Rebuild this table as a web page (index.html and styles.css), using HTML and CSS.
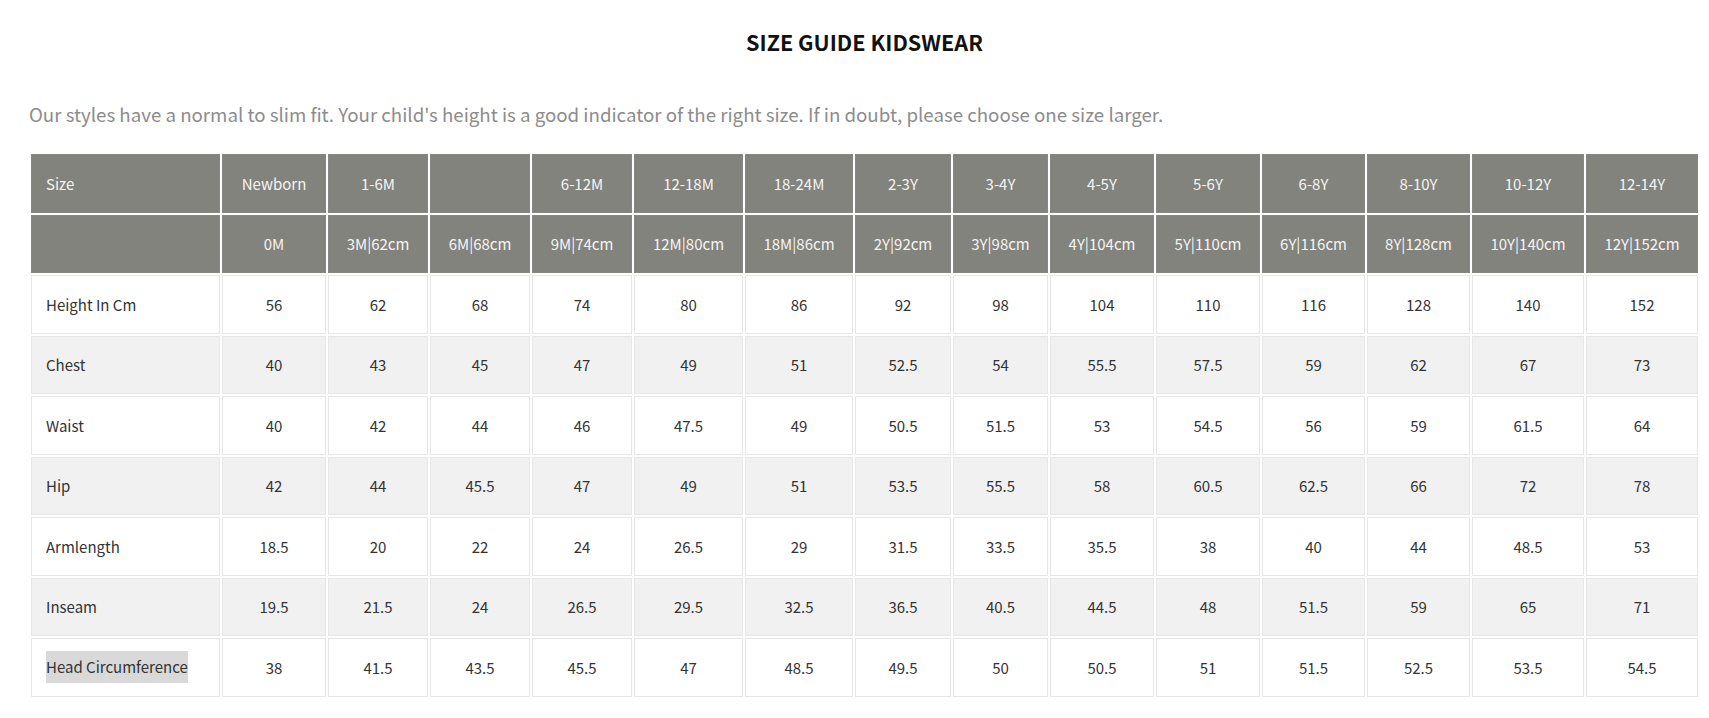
FILE: index.html
```html
<!DOCTYPE html>
<html lang="en">
<head>
<meta charset="utf-8">
<title>Size Guide Kidswear</title>
<link rel="stylesheet" href="styles.css">
</head>
<body>
<div class="page">
  <h1 class="title">SIZE GUIDE KIDSWEAR</h1>
  <p class="intro">Our styles have a normal to slim fit. Your child's height is a good indicator of the right size. If in doubt, please choose one size larger.</p>
  <table class="size-table">
    <colgroup>
      <col class="c-label">
      <col class="c104"><col class="c100"><col class="c100"><col class="c100">
      <col class="c109"><col class="c108"><col class="c96"><col class="c95">
      <col class="c104"><col class="c104"><col class="c103"><col class="c103">
      <col class="c112"><col class="c112">
    </colgroup>
    <thead>
      <tr>
        <th class="label">Size</th><th>Newborn</th><th>1-6M</th><th></th><th>6-12M</th><th>12-18M</th><th>18-24M</th><th>2-3Y</th><th>3-4Y</th><th>4-5Y</th><th>5-6Y</th><th>6-8Y</th><th>8-10Y</th><th>10-12Y</th><th>12-14Y</th>
      </tr>
      <tr>
        <th class="label"></th><th>0M</th><th>3M|62cm</th><th>6M|68cm</th><th>9M|74cm</th><th>12M|80cm</th><th>18M|86cm</th><th>2Y|92cm</th><th>3Y|98cm</th><th>4Y|104cm</th><th>5Y|110cm</th><th>6Y|116cm</th><th>8Y|128cm</th><th>10Y|140cm</th><th>12Y|152cm</th>
      </tr>
    </thead>
    <tbody>
      <tr>
        <td class="label">Height In Cm</td><td>56</td><td>62</td><td>68</td><td>74</td><td>80</td><td>86</td><td>92</td><td>98</td><td>104</td><td>110</td><td>116</td><td>128</td><td>140</td><td>152</td>
      </tr>
      <tr>
        <td class="label">Chest</td><td>40</td><td>43</td><td>45</td><td>47</td><td>49</td><td>51</td><td>52.5</td><td>54</td><td>55.5</td><td>57.5</td><td>59</td><td>62</td><td>67</td><td>73</td>
      </tr>
      <tr>
        <td class="label">Waist</td><td>40</td><td>42</td><td>44</td><td>46</td><td>47.5</td><td>49</td><td>50.5</td><td>51.5</td><td>53</td><td>54.5</td><td>56</td><td>59</td><td>61.5</td><td>64</td>
      </tr>
      <tr>
        <td class="label">Hip</td><td>42</td><td>44</td><td>45.5</td><td>47</td><td>49</td><td>51</td><td>53.5</td><td>55.5</td><td>58</td><td>60.5</td><td>62.5</td><td>66</td><td>72</td><td>78</td>
      </tr>
      <tr>
        <td class="label">Armlength</td><td>18.5</td><td>20</td><td>22</td><td>24</td><td>26.5</td><td>29</td><td>31.5</td><td>33.5</td><td>35.5</td><td>38</td><td>40</td><td>44</td><td>48.5</td><td>53</td>
      </tr>
      <tr>
        <td class="label">Inseam</td><td>19.5</td><td>21.5</td><td>24</td><td>26.5</td><td>29.5</td><td>32.5</td><td>36.5</td><td>40.5</td><td>44.5</td><td>48</td><td>51.5</td><td>59</td><td>65</td><td>71</td>
      </tr>
      <tr>
        <td class="label"><span class="highlight">Head Circumference</span></td><td>38</td><td>41.5</td><td>43.5</td><td>45.5</td><td>47</td><td>48.5</td><td>49.5</td><td>50</td><td>50.5</td><td>51</td><td>51.5</td><td>52.5</td><td>53.5</td><td>54.5</td>
      </tr>
    </tbody>
  </table>
</div>
</body>
</html>
```

FILE: styles.css
```css
* {
  box-sizing: border-box;
}

html, body {
  margin: 0;
  padding: 0;
  background: #ffffff;
}

body {
  font-family: "Noto Sans CJK SC", "Source Sans Pro", "Open Sans", sans-serif;
  color: #333333;
}

.page {
  padding: 27px 9px 0 29px;
}

.title {
  margin: 0;
  text-align: center;
  font-size: 21.6px;
  line-height: 30px;
  font-weight: 700;
  color: #111111;
  letter-spacing: 0;
}

.intro {
  margin: 42px 0 0 0;
  font-size: 18.7px;
  line-height: 30px;
  color: #8c8c8c;
}

.size-table {
  margin-top: 23px;
  border-collapse: separate;
  border-spacing: 2px;
  table-layout: fixed;
  width: 1671px;
  font-size: 15px;
}

.c-label { width: 189px; }
.c95 { width: 95px; }
.c96 { width: 96px; }
.c100 { width: 100px; }
.c103 { width: 103px; }
.c104 { width: 104px; }
.c108 { width: 108px; }
.c109 { width: 109px; }
.c112 { width: 112px; }

.size-table th,
.size-table td {
  height: 58.5px;
  padding: 0 4px;
  text-align: center;
  vertical-align: middle;
  white-space: nowrap;
}

.size-table th {
  background: #83837d;
  color: #f4f4f2;
  font-weight: 400;
  border: 1px solid #878781;
}

.size-table td {
  border: 1px solid #e7e7e7;
  background: #ffffff;
  color: #333333;
}

.size-table tbody tr:nth-child(even) td {
  background: #f1f1f1;
}

.size-table .label {
  text-align: left;
  padding-left: 14px;
}

.highlight {
  display: inline-block;
  background: #d9d9d9;
  line-height: 32px;
}
```
